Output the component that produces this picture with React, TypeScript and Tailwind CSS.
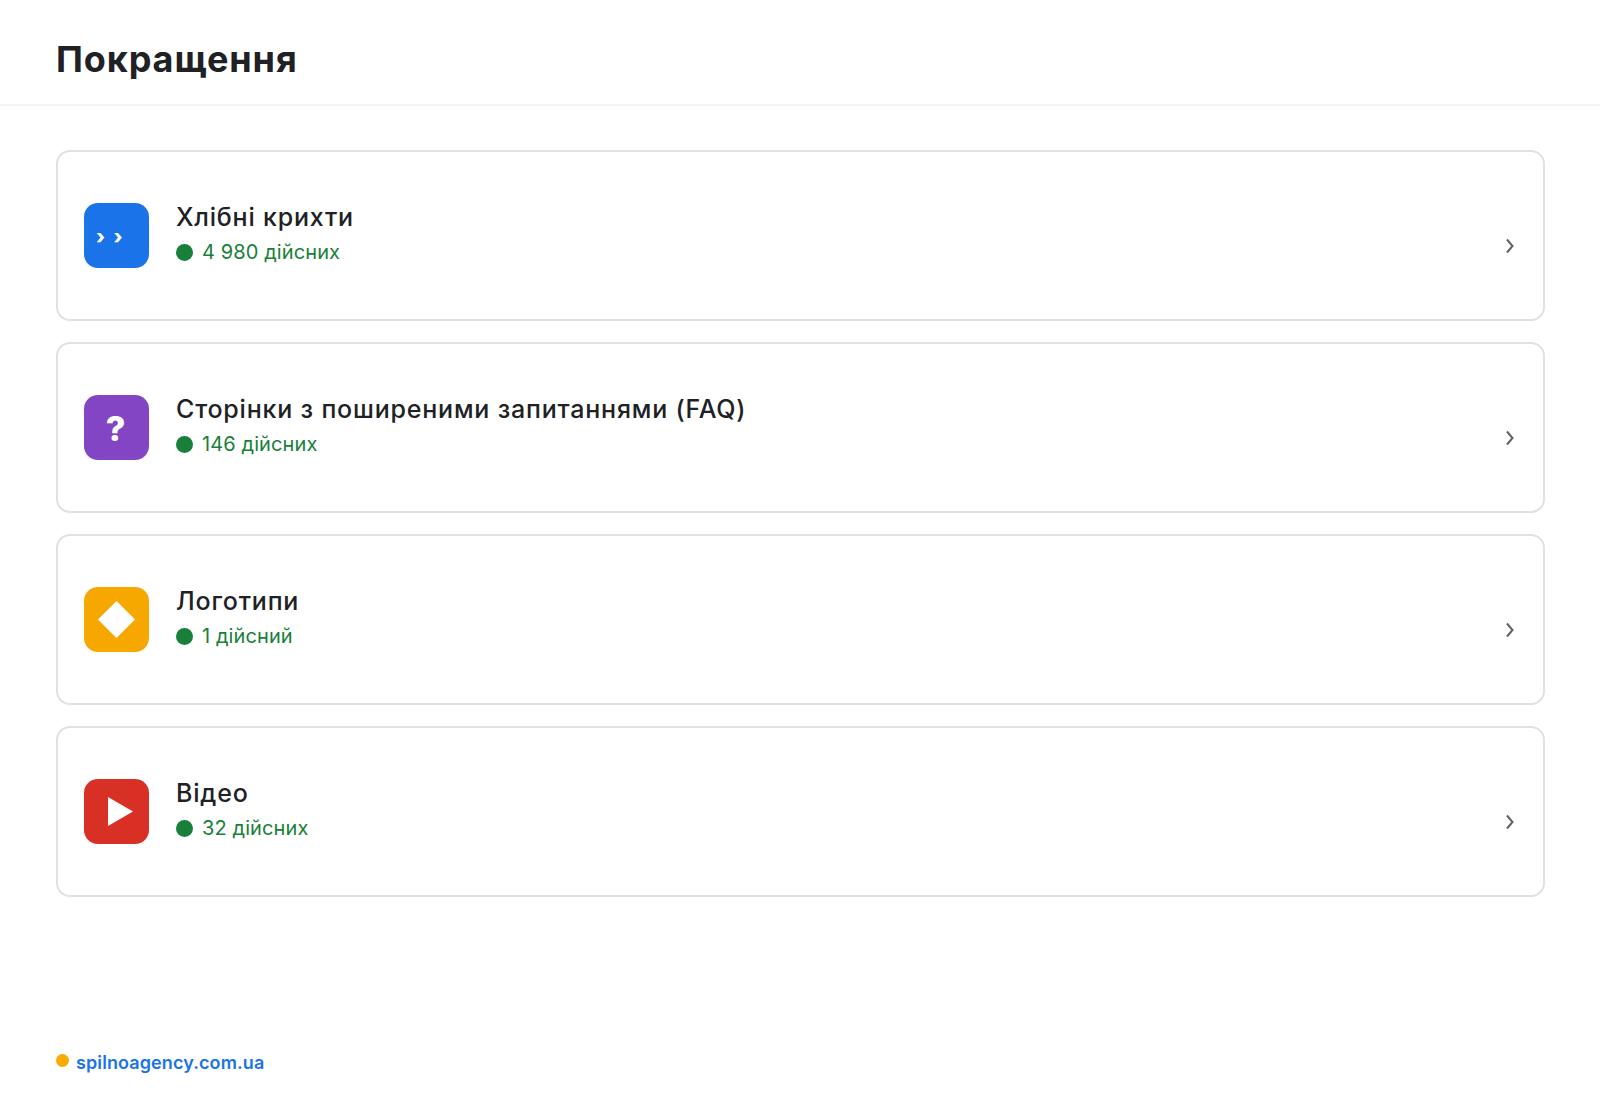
import React from "react";

const font = "font-['Inter','Noto_Sans',sans-serif]";

type Item = { title: string; status: string; color: string; icon: React.ReactNode };

const items: Item[] = [
  {
    title: "Хлібні крихти",
    status: "4 980 дійсних",
    color: "bg-[#1a73e8]",
    icon: (
      <span className="w-full pl-[12px] pt-[3px] flex gap-[8.5px] text-[20px] font-extrabold leading-none">
        <span>›</span>
        <span>›</span>
      </span>
    ),
  },
  {
    title: "Сторінки з поширеними запитаннями (FAQ)",
    status: "146 дійсних",
    color: "bg-[#8345c4]",
    icon: <span className="text-[34px] font-extrabold leading-none mt-[2px] mr-[2px]">?</span>,
  },
  {
    title: "Логотипи",
    status: "1 дійсний",
    color: "bg-[#f7a800]",
    icon: (
      <svg width="37" height="37" viewBox="0 0 38 38" fill="#fff">
        <path d="M19 0 38 19 19 38 0 19Z" />
      </svg>
    ),
  },
  {
    title: "Відео",
    status: "32 дійсних",
    color: "bg-[#d93025]",
    icon: (
      <svg width="25" height="29" viewBox="0 0 26 30" fill="#fff" className="ml-[8px]">
        <path d="M0 0 26 15 0 30Z" />
      </svg>
    ),
  },
];

export default function App() {
  return (
    <div className={`${font} bg-white min-h-[1100px] flex flex-col text-[#202124]`}>
      {/* Header */}
      <header className="h-[106px] border-b-2 border-[#f1f3f4] px-[56px] pt-[14px] flex items-center">
        <h1 className="text-[36px] font-bold leading-none tracking-[0.9px]">Покращення</h1>
      </header>

      {/* Cards */}
      <main className="pl-[56px] pr-[55px] pt-[44px] flex flex-col gap-[21px]">
        {items.map((item) => (
          <div
            key={item.title}
            className="h-[171px] rounded-[14px] border-2 border-[#e0e0e6] pl-[26px] pr-[28px] flex items-center"
          >
            <div className={`w-[65px] h-[65px] rounded-[14px] ${item.color} text-white flex items-center justify-center shrink-0`}>
              {item.icon}
            </div>
            <div className="ml-[27px] mb-[4px] flex-1">
              <div className="text-[25px] font-medium leading-[32px] tracking-[0.8px]">{item.title}</div>
              <div className="mt-[5px] flex items-center gap-[9px] text-[20px] leading-[28px] tracking-[0.1px] text-[#188038]">
                <span className="w-[17px] h-[17px] rounded-full bg-[#188038]" />
                {item.status}
              </div>
            </div>
            <svg width="8" height="16" viewBox="0 0 8 16" fill="none" stroke="#5f6368" strokeWidth="2" className="mt-[21px] -translate-x-[1px]">
              <path d="M1 1.5 6.5 8 1 14.5" />
            </svg>
          </div>
        ))}
      </main>

      {/* Footer */}
      <footer className="mt-[155px] px-[56px] flex items-start gap-[7px]">
        <span className="w-[13px] h-[13px] rounded-full bg-[#f9ab00] mt-[2px]" />
        <span className="text-[18px] font-semibold leading-[22px] tracking-[0.1px] text-[#1a73e8]">spilnoagency.com.ua</span>
      </footer>
    </div>
  );
}
